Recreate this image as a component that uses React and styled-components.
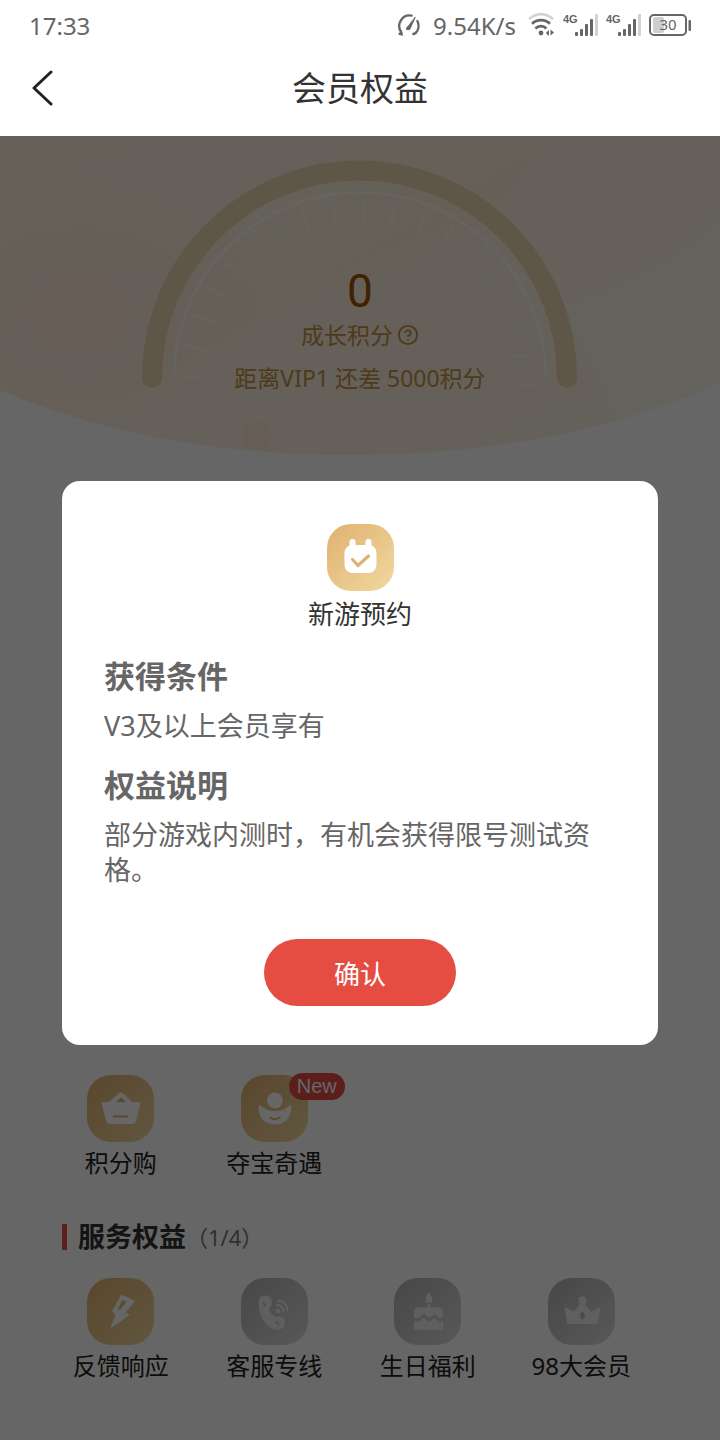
import React, { useState } from 'react';
import styled, { createGlobalStyle } from 'styled-components';
import { FiHelpCircle } from 'react-icons/fi';

const theme = {
  font: "'Noto Sans', 'Noto Sans CJK SC', sans-serif",
  red: '#e64d42',
  status: '#666',
  text: '#333',
};

const GlobalStyle = createGlobalStyle`
  * {
    box-sizing: border-box;
  }

  body {
    margin: 0;
    background: #fff;
    font-family: ${theme.font};
    color: ${theme.text};
  }

  h1, h2, h3, p, ul {
    margin: 0;
    padding: 0;
  }

  button {
    padding: 0;
    border: 0;
    background: none;
    font: inherit;
    color: inherit;
    cursor: pointer;
  }

  svg {
    display: block;
    flex-shrink: 0;
  }
`;

const Screen = styled.div`
  display: flex;
  flex-direction: column;
  min-height: 100vh;
`;

const StatusBar = styled.div`
  display: flex;
  align-items: center;
  height: 50px;
  padding: 0 28px 0 29px;
  font-size: 24px;
  color: ${theme.status};
`;

const StatusIcons = styled.div`
  display: flex;
  align-items: center;
  gap: 8px;
  margin-left: auto;
`;

const Speed = styled.span`
  padding: 0 4px;
`;

const NavBar = styled.header`
  display: grid;
  grid-template-columns: 60px 1fr 60px;
  align-items: center;
  height: 86px;
  padding: 0 16px 10px;
`;

const BackButton = styled.button`
  display: flex;
  align-items: center;
  height: 60px;
  padding-left: 14px;
`;

const NavTitle = styled.h1`
  font-size: 34px;
  font-weight: 400;
  line-height: 48px;
  text-align: center;
`;

/* page and dialog mask share one grid cell */
const Body = styled.div`
  flex: 1;
  display: grid;

  > * {
    grid-area: 1 / 1;
  }
`;

const Page = styled.main`
  display: flex;
  flex-direction: column;
`;

const Hero = styled.section`
  display: grid;

  > * {
    grid-area: 1 / 1;
  }
`;

const HeroArt = styled.svg`
  width: 100%;
  height: auto;
`;

const HeroText = styled.div`
  display: flex;
  flex-direction: column;
  align-items: center;
  padding-top: 128px;
  font-size: 23px;
  line-height: 34px;
  color: #c49244;
`;

const Score = styled.strong`
  font-family: Roboto, sans-serif;
  font-size: 46px;
  font-weight: 400;
  line-height: 54px;
  color: #a05500;
`;

const ScoreLabel = styled.div`
  display: flex;
  align-items: center;
  gap: 4px;
  margin-bottom: 9px;
`;

const Benefits = styled.div`
  margin-top: auto;
  padding: 0 62px 57px 44px;
`;

const BenefitGrid = styled.ul`
  display: grid;
  grid-template-columns: repeat(4, 1fr);
  list-style: none;
`;

const Benefit = styled.button`
  display: flex;
  flex-direction: column;
  align-items: center;
  gap: 4px;
  width: 100%;
  font-size: 24px;
  line-height: 34px;
  color: #222;
`;

const Tile = styled.span`
  position: relative;
  display: flex;
  align-items: center;
  justify-content: center;
  width: 67px;
  height: 67px;
  border-radius: 24px;
  background: ${props => props.$locked
    ? 'linear-gradient(135deg, #b2b2b2, #dcdcdc)'
    : 'linear-gradient(135deg, #e0b270, #f1d8a0)'};
`;

const Badge = styled.span`
  position: absolute;
  top: -2px;
  left: 48px;
  height: 27px;
  padding: 0 8px;
  border-radius: 14px;
  background: ${theme.red};
  font-family: 'Liberation Sans', sans-serif;
  font-size: 20px;
  line-height: 27px;
  color: #fff;
`;

const SectionHead = styled.div`
  display: flex;
  align-items: center;
  height: 40px;
  margin: 37px 0 21px 18px;

  &::before {
    content: '';
    width: 5px;
    height: 26px;
    margin-right: 11px;
    background: ${theme.red};
  }
`;

const SectionTitle = styled.h2`
  font-size: 27px;
  line-height: 40px;
`;

const SectionCount = styled.span`
  font-size: 22px;
  line-height: 40px;
  color: #777;
`;

const Mask = styled.div`
  z-index: 1;
  display: flex;
  align-items: flex-start;
  padding: 345px 62px 60px;
  background: rgba(0, 0, 0, 0.6);
`;

const Dialog = styled.section`
  display: flex;
  flex-direction: column;
  align-items: center;
  width: 100%;
  padding: 43px 42px 39px;
  border-radius: 18px;
  background: #fff;
`;

const DialogTitle = styled.h2`
  margin: 5px 0 24px;
  font-size: 26px;
  font-weight: 400;
  line-height: 36px;
`;

const DialogBlock = styled.div`
  align-self: stretch;
  margin-bottom: 22px;
  color: #666;
`;

const BlockTitle = styled.h3`
  margin-bottom: 12px;
  font-size: 31px;
  line-height: 40px;
`;

const BlockText = styled.p`
  font-size: 27px;
  line-height: 35px;
`;

const ConfirmButton = styled.button`
  width: 192px;
  height: 67px;
  margin-top: 30px;
  border-radius: 34px;
  background: ${theme.red};
  font-size: 26px;
  color: #fff;
`;

const GaugeIcon = () => (
  <svg width="26" height="24" viewBox="0 0 26 24" fill="none" stroke={theme.status} strokeWidth="2.4" strokeLinecap="round">
    <path d="M4.600 20.800L6.600 21.200 6.200 19A10.500 10.500 0 0 1 16.600 2.600" />
    <path d="M22.400 8a10.600 10.600 0 0 1-1.800 12.200l-2.200.8" />
    <path d="M11.400 15.600L20.200 4.200 15 16z" fill={theme.status} strokeWidth="1" strokeLinejoin="round" />
    <circle cx="13" cy="15.400" r="1.800" fill={theme.status} stroke="none" />
  </svg>
);

const WifiIcon = () => (
  <svg width="27" height="24" viewBox="0 0 27 24" fill="none" stroke={theme.status}>
    <path d="M1 6.200a17 17 0 0 1 24 0" stroke="#d2d2d2" strokeWidth="2.600" />
    <path d="M4 10.800a13 13 0 0 1 18 0" strokeWidth="2.800" />
    <path d="M7.400 15.400a8 8 0 0 1 11 0" strokeWidth="2.800" />
    <circle cx="13" cy="20" r="2.400" fill={theme.status} stroke="none" />
    <path d="M17.800 20l3.200-3v6zM22.500 16.500v6l3.500-3z" fill={theme.status} stroke="none" />
  </svg>
);

const SignalIcon = () => (
  <svg width="35" height="24" viewBox="0 0 35 24" fill={theme.status}>
    <text x="0" y="10" fontFamily="'Liberation Sans Narrow', 'Liberation Sans', sans-serif" fontSize="11" fontWeight="700">4G</text>
    <rect x="12" y="19" width="3" height="4" rx="1" />
    <rect x="17" y="16" width="3" height="7" rx="1" />
    <rect x="22" y="11" width="3" height="12" rx="1" />
    <rect x="27" y="6" width="3" height="17" rx="1" />
    <rect x="32" y="1" width="3" height="22" rx="1" fill="#d2d2d2" />
  </svg>
);

const BatteryIcon = () => (
  <svg width="43" height="24" viewBox="0 0 43 24">
    <rect x="4" y="4" width="11" height="16" rx="2" fill="#cfcfcf" />
    <rect x="1" y="2" width="36" height="20" rx="4" fill="none" stroke={theme.status} strokeWidth="2" />
    <rect x="39.500" y="7" width="2.500" height="11" rx="1" fill={theme.status} />
    <text x="19" y="17" textAnchor="middle" fontFamily="'Noto Sans', sans-serif" fontSize="15" fill={theme.status}>30</text>
  </svg>
);

const BackIcon = () => (
  <svg width="26" height="36" viewBox="0 0 26 36" fill="none" stroke="#222" strokeWidth="3" strokeLinecap="round" strokeLinejoin="round">
    <path d="M21 2L4 18l17 16" />
  </svg>
);

const CalendarIcon = () => (
  <svg width="67" height="67" viewBox="0 0 67 67">
    <g fill="#fff">
      <rect x="17.500" y="21" width="32" height="28" rx="8" />
      <rect x="22.500" y="15" width="6" height="12" rx="3" />
      <rect x="38.500" y="15" width="6" height="12" rx="3" />
    </g>
    <path d="M25.500 35.500l5.500 6L41.500 32" fill="none" stroke="#e0b270" strokeWidth="3.200" strokeLinecap="round" />
  </svg>
);

const BasketIcon = () => (
  <svg width="67" height="67" viewBox="0 0 67 67">
    <path d="M16 27h6l9.500-8.500q2.500-2 5 0L45 27h6q3 0 2.200 3L49 46q-1 3-4 3H23q-3 0-4-3l-4-16q-.6-3 1-3z" fill="#fff" />
    <path d="M29 27l5-4.500 5 4.500z" fill="#e0b270" />
    <path d="M27 41.500h13" stroke="#e0b270" strokeWidth="2" strokeLinecap="round" />
  </svg>
);

const TreasureIcon = () => (
  <svg width="67" height="67" viewBox="0 0 67 67">
    <path d="M19.500 30.500q6 5.500 14.500 5.500t14.500-5.500q1.800-.8 2 1.500C50 43 44 49.500 34 49.500S17.500 43 17.500 32q.2-2.300 2-1.500z" fill="#fff" />
    <circle cx="34" cy="25.500" r="9.500" fill="#e5bb7b" />
    <circle cx="34" cy="25.500" r="8" fill="#fff" />
    <path d="M29.500 42.500q4.500 3.500 9 0" fill="none" stroke="#e0b270" strokeWidth="2" strokeLinecap="round" />
  </svg>
);

const BoltIcon = () => (
  <svg width="67" height="67" viewBox="0 0 67 67">
    <path d="M34.500 17.500L47 23.500 37.500 34.500 41.500 37 24.500 49 29.500 37 26 33z" fill="#fff" stroke="#fff" strokeWidth="1.500" strokeLinejoin="round" />
    <path d="M35 22l4.500 2-6.500 7.500-2 .5z" fill="#e3b878" />
  </svg>
);

const PhoneIcon = () => (
  <svg width="67" height="67" viewBox="0 0 67 67">
    <path d="M17.500 24c0-7 9-8.500 12-4 2.500 4 1 8-1.500 10.500 1 4 3.500 7 6.500 8.500 4-1.500 9.500 0 9.500 6 0 5-5 7.500-10 6.500C24 49 17.500 36 17.500 24z" fill="#eee" />
    <path d="M22.500 25l2 3M35 43.500l3 3" stroke="#bbb" strokeWidth="1.500" strokeLinecap="round" />
    <path d="M36 31.500q2.500 0 2.500 2.500h-2.500zM36 27c4 0 6.500 3 6.500 7M37 22.500c6 .5 9.500 5 9.500 11" fill="none" stroke="#eee" strokeWidth="1.800" strokeLinecap="round" />
  </svg>
);

const CakeIcon = () => (
  <svg width="67" height="67" viewBox="0 0 67 67" fill="#eee">
    <path d="M34.500 14q4 5 4 7.500a3.500 3.500 0 0 1-7 0q0-2.500 3-7.500z" />
    <rect x="33.500" y="26" width="3" height="6" />
    <path d="M25 29.500h19q5 0 5 5v4.500l-3 1.500L40.500 36 35 40.500 30 36l-6 4.500-4-1v-5q0-5 5-5z" />
    <path d="M20 42.500l4 1.500 6-4.500 5 4.500 5.500-4.500L46 44l3-1.500V52H20z" />
  </svg>
);

const CrownIcon = () => (
  <svg width="67" height="67" viewBox="0 0 67 67">
    <path d="M16.500 29l9.500 4.500 6.500-8h4L43 33.500l9.500-4.500L50 44.500q-.3 1.500-2 1.500H21q-1.700 0-2-1.500z" fill="#eee" />
    <circle cx="34.500" cy="22.500" r="4" fill="#eee" />
    <path d="M34.500 33.500q5 4 0 8.500-5-4.500 0-8.500z" fill="#bcbcbc" />
  </svg>
);

// gauge ticks, 0deg points left and angles grow clockwise
const ticks = Array.from({ length: 19 }, (_, i) => {
  const a = (i * 10.15 * Math.PI) / 180;
  return {
    x1: 360 - 178 * Math.cos(a),
    y1: 241 - 178 * Math.sin(a),
    x2: 360 - 154 * Math.cos(a),
    y2: 241 - 154 * Math.sin(a),
  };
});

const HeroBackground = () => (
  <HeroArt viewBox="0 0 720 320" aria-hidden="true">
    <defs>
      <linearGradient id="heroBase" x1="0" y1="0" x2="1" y2="1">
        <stop offset="0" stopColor="#fdf2de" />
        <stop offset="0.4" stopColor="#fdf0de" />
        <stop offset="0.7" stopColor="#fcf2e0" />
        <stop offset="1" stopColor="#fbf5e4" />
      </linearGradient>
      <linearGradient id="heroDisc" x1="0" y1="0" x2="1" y2="1">
        <stop offset="0.2" stopColor="#ffe9d6" stopOpacity="0" />
        <stop offset="1" stopColor="#ffe9d6" />
      </linearGradient>
      <radialGradient id="heroGlow">
        <stop offset="0" stopColor="#ffe8d8" />
        <stop offset="1" stopColor="#ffe8d8" stopOpacity="0" />
      </radialGradient>
      <clipPath id="heroClip">
        <path d="M0 0H720V247Q560 319 350 319Q150 319 0 254Z" />
      </clipPath>
    </defs>
    <g clipPath="url(#heroClip)">
      <rect width="720" height="320" fill="url(#heroBase)" />
      <path d="M560 170Q680 130 720 74V247L620 300Q590 220 560 170Z" fill="#f6f7ec" opacity="0.6" />
      <path d="M280 0H542Q512 90 400 130T160 230Q130 120 280 0Z" fill="url(#heroDisc)" opacity="0.6" />
      <ellipse cx="80" cy="180" rx="200" ry="140" fill="url(#heroGlow)" opacity="0.8" />
      <circle cx="257" cy="300" r="15" fill="#ffe6d0" opacity="0.6" />
    </g>
    <path d="M152 242a207.500 207.500 0 0 1 415 0" fill="none" stroke="#ead6b2" strokeWidth="20" strokeLinecap="round" />
    <path d="M174 242a186 186 0 0 1 372 0" fill="none" stroke="#fbfdf8" strokeWidth="3" opacity="0.7" />
    <g stroke="#fbfdf8" strokeWidth="3" opacity="0.6">
      {ticks.map((t, i) => (
        <line key={i} {...t} />
      ))}
    </g>
  </HeroArt>
);

const gameBenefits = [
  { label: '积分购', Icon: BasketIcon },
  { label: '夺宝奇遇', Icon: TreasureIcon, badge: 'New' },
];

const serviceBenefits = [
  { label: '反馈响应', Icon: BoltIcon },
  { label: '客服专线', Icon: PhoneIcon, locked: true },
  { label: '生日福利', Icon: CakeIcon, locked: true },
  { label: '98大会员', Icon: CrownIcon, locked: true },
];

const BenefitList = ({ items }) => (
  <BenefitGrid>
    {items.map(({ label, Icon, locked, badge }) => (
      <li key={label}>
        <Benefit type="button">
          <Tile $locked={locked}>
            <Icon />
            {badge && <Badge>{badge}</Badge>}
          </Tile>
          {label}
        </Benefit>
      </li>
    ))}
  </BenefitGrid>
);

export default function App() {
  const [open, setOpen] = useState(true);

  return (
    <Screen lang="zh-CN">
      <GlobalStyle />
      <StatusBar>
        <span>17:33</span>
        <StatusIcons>
          <GaugeIcon />
          <Speed>9.54K/s</Speed>
          <WifiIcon />
          <SignalIcon />
          <SignalIcon />
          <BatteryIcon />
        </StatusIcons>
      </StatusBar>

      <NavBar>
        <BackButton type="button" aria-label="返回">
          <BackIcon />
        </BackButton>
        <NavTitle>会员权益</NavTitle>
      </NavBar>

      <Body>
        <Page>
          <Hero>
            <HeroBackground />
            <HeroText>
              <Score>0</Score>
              <ScoreLabel>
                成长积分
                <button type="button" aria-label="积分说明">
                  <FiHelpCircle size={22} />
                </button>
              </ScoreLabel>
              <p>距离VIP1 还差 5000积分</p>
            </HeroText>
          </Hero>

          <Benefits>
            <BenefitList items={gameBenefits} />
            <SectionHead>
              <SectionTitle>服务权益</SectionTitle>
              <SectionCount>（1/4）</SectionCount>
            </SectionHead>
            <BenefitList items={serviceBenefits} />
          </Benefits>
        </Page>

        {open && (
          <Mask>
            <Dialog role="dialog" aria-modal="true" aria-labelledby="benefit-title">
              <Tile>
                <CalendarIcon />
              </Tile>
              <DialogTitle id="benefit-title">新游预约</DialogTitle>
              <DialogBlock>
                <BlockTitle>获得条件</BlockTitle>
                <BlockText>V3及以上会员享有</BlockText>
              </DialogBlock>
              <DialogBlock>
                <BlockTitle>权益说明</BlockTitle>
                <BlockText>部分游戏内测时，有机会获得限号测试资格。</BlockText>
              </DialogBlock>
              <ConfirmButton type="button" onClick={() => setOpen(false)}>
                确认
              </ConfirmButton>
            </Dialog>
          </Mask>
        )}
      </Body>
    </Screen>
  );
}
